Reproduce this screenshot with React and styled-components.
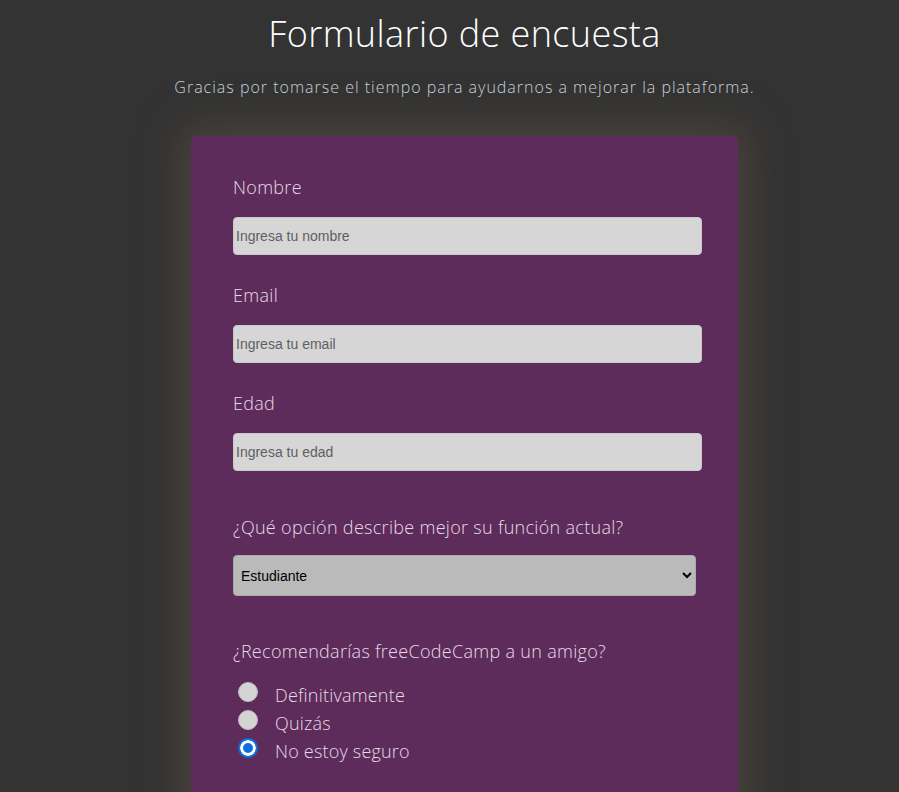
import React from 'react';
import styled, { createGlobalStyle } from 'styled-components';

const GlobalStyle = createGlobalStyle`
  html, body {
    margin: 0;
    padding: 0;
    background-color: #333333;
  }
  body {
    font-family: "Open Sans", "Liberation Sans", sans-serif;
    height: 792px;
    overflow: hidden;
  }
`;

const Page = styled.main`
  display: flex;
  flex-direction: column;
  align-items: center;
  padding: 12px 0 0 30px;
`;

const Title = styled.h1`
  margin: 0;
  font-size: 36px;
  font-weight: 300;
  letter-spacing: 0.4px;
  color: #ffffff;
  line-height: 44px;
`;

const Subtitle = styled.p`
  margin: 20px 0 0;
  font-size: 16px;
  font-weight: 300;
  letter-spacing: 1px;
  color: #c9d2da;
  line-height: 22px;
`;

const Card = styled.form`
  margin-top: 38px;
  width: 547px;
  box-sizing: border-box;
  padding: 39px 36px 40px 42px;
  background-color: #5e2c5b;
  border-radius: 5px;
  box-shadow: 0 0 40px 10px rgba(95, 80, 65, 0.55);
  min-height: 700px;
`;

const Field = styled.div`
  display: flex;
  flex-direction: column;
  margin-bottom: ${p => p.$gap || 30}px;
`;

const Label = styled.label`
  font-size: 18px;
  font-weight: 300;
  letter-spacing: 0.3px;
  color: #e6dbe6;
  line-height: 24px;
  margin-bottom: ${p => p.$below || 18}px;
`;

const TextInput = styled.input`
  box-sizing: border-box;
  width: 469px;
  height: 38px;
  padding: 0 2px;
  border: 1px solid #c8c8c8;
  border-radius: 4px;
  background-color: #d6d6d6;
  font-family: "Liberation Sans", Arial, sans-serif;
  font-size: 14px;
  color: #333;
  &::placeholder { color: #5f5f5f; }
  &:focus { outline: none; }
`;

const Select = styled.select`
  box-sizing: border-box;
  width: 463px;
  height: 41px;
  padding: 0 3px;
  border: 1px solid #aaa;
  border-radius: 4px;
  background-color: #bababa;
  font-family: "Liberation Sans", Arial, sans-serif;
  font-size: 14px;
  color: #000;
`;

const RadioList = styled.div`
  display: flex;
  flex-direction: column;
  gap: 6px;
`;

const RadioRow = styled.label`
  display: flex;
  align-items: center;
  gap: 17px;
  font-size: 18px;
  font-weight: 300;
  letter-spacing: 0.2px;
  color: #e6dbe6;
  line-height: 22px;
`;

const Radio = styled.input`
  appearance: none;
  margin: 0 0 0 5px;
  width: 20px;
  height: 20px;
  border-radius: 50%;
  background-color: #d4d4d4;
  border: 1px solid #bcbcbc;
  box-sizing: border-box;
  position: relative;
  top: -3px;
  &:checked {
    background-color: #0b6fde;
    border: 2px solid #0b6fde;
    box-shadow: inset 0 0 0 3px #ffffff;
  }
`;

const textFields = [
  { id: 'name', label: 'Nombre', type: 'text', placeholder: 'Ingresa tu nombre' },
  { id: 'email', label: 'Email', type: 'email', placeholder: 'Ingresa tu email' },
  { id: 'age', label: 'Edad', type: 'number', placeholder: 'Ingresa tu edad' },
];

const options = ['Definitivamente', 'Quizás', 'No estoy seguro'];

export default function App() {
  return (
    <>
      <GlobalStyle />
      <Page>
        <Title>Formulario de encuesta</Title>
        <Subtitle>Gracias por tomarse el tiempo para ayudarnos a mejorar la plataforma.</Subtitle>
        <Card onSubmit={e => e.preventDefault()}>
          {textFields.map((f, i) => (
            <Field key={f.id} $gap={i === 2 ? 44 : 28}>
              <Label htmlFor={f.id}>{f.label}</Label>
              <TextInput id={f.id} type={f.type} placeholder={f.placeholder} />
            </Field>
          ))}
          <Field $gap={43}>
            <Label htmlFor="role" $below={16}>¿Qué opción describe mejor su función actual?</Label>
            <Select id="role" defaultValue="student">
              <option value="student">Estudiante</option>
              <option value="job">Trabajo a tiempo completo</option>
              <option value="learner">Aprendiz a tiempo completo</option>
              <option value="other">Otro</option>
            </Select>
          </Field>
          <Field>
            <Label $below={21}>¿Recomendarías freeCodeCamp a un amigo?</Label>
            <RadioList>
              {options.map((o, i) => (
                <RadioRow key={o}>
                  <Radio type="radio" name="recommend" defaultChecked={i === 2} />
                  {o}
                </RadioRow>
              ))}
            </RadioList>
          </Field>
        </Card>
      </Page>
    </>
  );
}
